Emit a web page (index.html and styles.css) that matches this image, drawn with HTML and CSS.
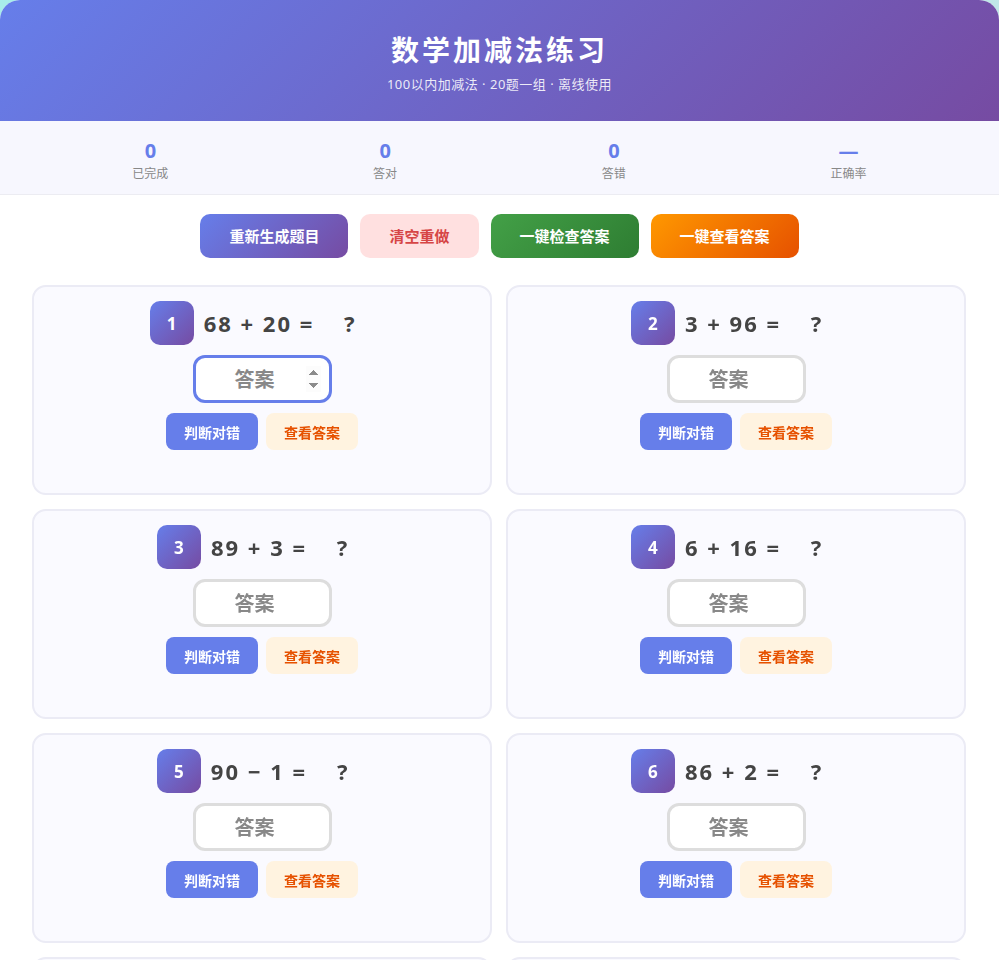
FILE: index.html
```html
<!DOCTYPE html>
<html lang="zh-CN">
<head>
<meta charset="utf-8">
<title>数学加减法练习</title>
<link rel="stylesheet" href="styles.css">
</head>
<body>
<div class="app">
  <header class="hero">
    <h1 class="hero-title">数学加减法练习</h1>
    <p class="hero-sub">100以内加减法 · 20题一组 · 离线使用</p>
  </header>
  <section class="stats">
    <div class="stat"><div class="stat-num">0</div><div class="stat-label">已完成</div></div>
    <div class="stat"><div class="stat-num">0</div><div class="stat-label">答对</div></div>
    <div class="stat"><div class="stat-num">0</div><div class="stat-label">答错</div></div>
    <div class="stat"><div class="stat-num">—</div><div class="stat-label">正确率</div></div>
  </section>
  <section class="toolbar">
    <button class="btn btn-primary">重新生成题目</button>
    <button class="btn btn-reset">清空重做</button>
    <button class="btn btn-check">一键检查答案</button>
    <button class="btn btn-show">一键查看答案</button>
  </section>
  <main class="grid">
    <div class="card"><div class="eq"><span class="badge">1</span><span class="expr">68 + 20 =</span><span class="ans">?</span></div><input class="answer is-focus" type="number" placeholder="答案" autofocus><div class="actions"><button class="mini mini-judge">判断对错</button><button class="mini mini-show">查看答案</button></div></div>
    <div class="card"><div class="eq"><span class="badge">2</span><span class="expr">3 + 96 =</span><span class="ans">?</span></div><input class="answer" type="number" placeholder="答案"><div class="actions"><button class="mini mini-judge">判断对错</button><button class="mini mini-show">查看答案</button></div></div>
    <div class="card"><div class="eq"><span class="badge">3</span><span class="expr">89 + 3 =</span><span class="ans">?</span></div><input class="answer" type="number" placeholder="答案"><div class="actions"><button class="mini mini-judge">判断对错</button><button class="mini mini-show">查看答案</button></div></div>
    <div class="card"><div class="eq"><span class="badge">4</span><span class="expr">6 + 16 =</span><span class="ans">?</span></div><input class="answer" type="number" placeholder="答案"><div class="actions"><button class="mini mini-judge">判断对错</button><button class="mini mini-show">查看答案</button></div></div>
    <div class="card"><div class="eq"><span class="badge">5</span><span class="expr">90 − 1 =</span><span class="ans">?</span></div><input class="answer" type="number" placeholder="答案"><div class="actions"><button class="mini mini-judge">判断对错</button><button class="mini mini-show">查看答案</button></div></div>
    <div class="card"><div class="eq"><span class="badge">6</span><span class="expr">86 + 2 =</span><span class="ans">?</span></div><input class="answer" type="number" placeholder="答案"><div class="actions"><button class="mini mini-judge">判断对错</button><button class="mini mini-show">查看答案</button></div></div>
    <div class="card"><div class="eq"><span class="badge">7</span><span class="expr">45 − 18 =</span><span class="ans">?</span></div><input class="answer" type="number" placeholder="答案"><div class="actions"><button class="mini mini-judge">判断对错</button><button class="mini mini-show">查看答案</button></div></div>
    <div class="card"><div class="eq"><span class="badge">8</span><span class="expr">27 + 35 =</span><span class="ans">?</span></div><input class="answer" type="number" placeholder="答案"><div class="actions"><button class="mini mini-judge">判断对错</button><button class="mini mini-show">查看答案</button></div></div>
    <div class="card"><div class="eq"><span class="badge">9</span><span class="expr">73 − 29 =</span><span class="ans">?</span></div><input class="answer" type="number" placeholder="答案"><div class="actions"><button class="mini mini-judge">判断对错</button><button class="mini mini-show">查看答案</button></div></div>
    <div class="card"><div class="eq"><span class="badge">10</span><span class="expr">14 + 57 =</span><span class="ans">?</span></div><input class="answer" type="number" placeholder="答案"><div class="actions"><button class="mini mini-judge">判断对错</button><button class="mini mini-show">查看答案</button></div></div>
    <div class="card"><div class="eq"><span class="badge">11</span><span class="expr">62 − 40 =</span><span class="ans">?</span></div><input class="answer" type="number" placeholder="答案"><div class="actions"><button class="mini mini-judge">判断对错</button><button class="mini mini-show">查看答案</button></div></div>
    <div class="card"><div class="eq"><span class="badge">12</span><span class="expr">38 + 9 =</span><span class="ans">?</span></div><input class="answer" type="number" placeholder="答案"><div class="actions"><button class="mini mini-judge">判断对错</button><button class="mini mini-show">查看答案</button></div></div>
    <div class="card"><div class="eq"><span class="badge">13</span><span class="expr">81 − 56 =</span><span class="ans">?</span></div><input class="answer" type="number" placeholder="答案"><div class="actions"><button class="mini mini-judge">判断对错</button><button class="mini mini-show">查看答案</button></div></div>
    <div class="card"><div class="eq"><span class="badge">14</span><span class="expr">19 + 44 =</span><span class="ans">?</span></div><input class="answer" type="number" placeholder="答案"><div class="actions"><button class="mini mini-judge">判断对错</button><button class="mini mini-show">查看答案</button></div></div>
    <div class="card"><div class="eq"><span class="badge">15</span><span class="expr">50 − 23 =</span><span class="ans">?</span></div><input class="answer" type="number" placeholder="答案"><div class="actions"><button class="mini mini-judge">判断对错</button><button class="mini mini-show">查看答案</button></div></div>
    <div class="card"><div class="eq"><span class="badge">16</span><span class="expr">7 + 68 =</span><span class="ans">?</span></div><input class="answer" type="number" placeholder="答案"><div class="actions"><button class="mini mini-judge">判断对错</button><button class="mini mini-show">查看答案</button></div></div>
    <div class="card"><div class="eq"><span class="badge">17</span><span class="expr">94 − 7 =</span><span class="ans">?</span></div><input class="answer" type="number" placeholder="答案"><div class="actions"><button class="mini mini-judge">判断对错</button><button class="mini mini-show">查看答案</button></div></div>
    <div class="card"><div class="eq"><span class="badge">18</span><span class="expr">33 + 48 =</span><span class="ans">?</span></div><input class="answer" type="number" placeholder="答案"><div class="actions"><button class="mini mini-judge">判断对错</button><button class="mini mini-show">查看答案</button></div></div>
    <div class="card"><div class="eq"><span class="badge">19</span><span class="expr">66 − 31 =</span><span class="ans">?</span></div><input class="answer" type="number" placeholder="答案"><div class="actions"><button class="mini mini-judge">判断对错</button><button class="mini mini-show">查看答案</button></div></div>
    <div class="card"><div class="eq"><span class="badge">20</span><span class="expr">25 + 25 =</span><span class="ans">?</span></div><input class="answer" type="number" placeholder="答案"><div class="actions"><button class="mini mini-judge">判断对错</button><button class="mini mini-show">查看答案</button></div></div>
  </main>
</div>
</body>
</html>
```
FILE: styles.css
```css
* { box-sizing: border-box; }
html, body { margin: 0; padding: 0; }
body {
  font-family: "Noto Sans", "Noto Sans CJK SC", sans-serif;
  background: linear-gradient(135deg, #a8edea 0%, #fed6e3 100%);
  min-height: 100vh;
}
.app {
  background: #ffffff;
  border-radius: 20px;
  overflow: hidden;
  min-height: 100vh;
}
.hero {
  background: linear-gradient(135deg, #667eea 0%, #764ba2 100%);
  color: #fff;
  text-align: center;
  padding: 30px 20px 27px;
}
.hero-title {
  margin: 0 0 4px;
  font-size: 28px;
  line-height: 40px;
  font-weight: 700;
  letter-spacing: 3px;
}
.hero-sub {
  margin: 0;
  font-size: 13px;
  line-height: 20px;
  letter-spacing: 0.5px;
  color: rgba(255, 255, 255, 0.88);
}
.stats {
  display: flex;
  justify-content: space-around;
  padding: 18px 30px 11px;
  background: #f7f7fe;
  border-bottom: 1px solid #ececf2;
}
.stat { text-align: center; }
.stat-num {
  font-size: 20px;
  font-weight: 700;
  line-height: 24px;
  color: #667eea;
}
.stat-label {
  margin-top: 2px;
  font-size: 12px;
  line-height: 18px;
  color: #888;
}
.toolbar {
  display: flex;
  justify-content: center;
  gap: 12px;
  padding: 19px 32px 27px;
}
.btn {
  font-family: inherit;
  font-size: 15px;
  font-weight: 700;
  line-height: 20px;
  padding: 12px 29px;
  border: none;
  border-radius: 10px;
  color: #fff;
  cursor: pointer;
}
.btn-primary { background: linear-gradient(135deg, #667eea 0%, #764ba2 100%); }
.btn-reset { background: #ffe0e0; color: #d64545; }
.btn-check { background: linear-gradient(135deg, #43a047 0%, #2e7d32 100%); }
.btn-show { background: linear-gradient(135deg, #ff9800 0%, #e65100 100%); }
.grid {
  display: grid;
  grid-template-columns: 1fr 1fr;
  gap: 14px;
  padding: 0 33px 30px 32px;
}
.card {
  background: #fafaff;
  border: 2px solid #ebebf5;
  border-radius: 14px;
  padding: 14px 12px;
  min-height: 210px;
  display: flex;
  flex-direction: column;
  align-items: center;
  gap: 10px;
}
.eq {
  display: flex;
  align-items: center;
  gap: 10px;
  height: 44px;
}
.badge {
  width: 44px;
  height: 44px;
  border-radius: 10px;
  background: linear-gradient(135deg, #667eea 0%, #764ba2 100%);
  color: #fff;
  font-size: 17px;
  font-weight: 700;
  display: flex;
  align-items: center;
  justify-content: center;
}
.expr, .ans {
  font-size: 22px;
  font-weight: 700;
  color: #444;
  letter-spacing: 2px;
  white-space: pre;
}
.ans {
  width: 50px;
  text-align: center;
  letter-spacing: 0;
}
.answer {
  width: 139px;
  height: 48px;
  border: 3px solid #dddddd;
  border-radius: 12px;
  background: #fff;
  text-align: center;
  font-family: inherit;
  font-size: 20px;
  font-weight: 700;
  color: #333;
  outline: none;
  padding: 0 8px;
}
.answer::placeholder { color: #888; font-weight: 700; }
.answer.is-focus { border-color: #667eea; }
.actions {
  display: flex;
  gap: 8px;
}
.mini {
  font-family: inherit;
  font-size: 14px;
  font-weight: 700;
  height: 37px;
  width: 92px;
  border: none;
  border-radius: 8px;
  cursor: pointer;
}
.mini-judge { background: #667eea; color: #fff; }
.mini-show { background: #fff3e0; color: #e65100; }
```
